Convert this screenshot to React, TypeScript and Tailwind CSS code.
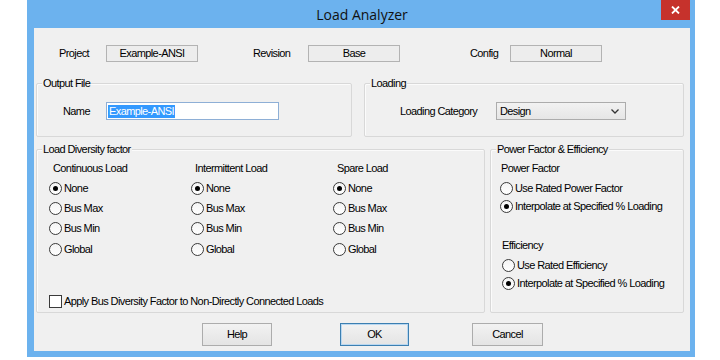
import React from 'react';

const ui = "font-['Liberation_Sans',Arial,sans-serif] text-[11px] leading-[13px] tracking-[-0.6px] text-black";

function Radio({ label, checked }: { label: string; checked?: boolean }) {
  return (
    <div className="flex items-center">
      <span className="flex h-[13px] w-[13px] items-center justify-center rounded-full border border-[#3a3a3a] bg-gradient-to-b from-[#f4f4f4] to-white">
        {checked && <span className="h-[5px] w-[5px] rounded-full bg-black" />}
      </span>
      <span className="ml-[2px] whitespace-nowrap">{label}</span>
    </div>
  );
}

function Group({ title, className, children }: { title: string; className: string; children: React.ReactNode }) {
  return (
    <div className={`relative rounded-[2px] border border-[#d8d8d8] shadow-[inset_1px_1px_0_#fbfbfb] ${className}`}>
      <span className="absolute -top-[7px] left-[5px] bg-[#f0f0f0] px-[1px] whitespace-nowrap">{title}</span>
      {children}
    </div>
  );
}

function Field({ value }: { value: string }) {
  return (
    <div className="flex h-[17px] w-[92px] items-center justify-center border border-[#b3b3b3] bg-[#ededed]">{value}</div>
  );
}

function Button({ label, isDefault, className }: { label: string; isDefault?: boolean; className: string }) {
  return (
    <div
      className={`flex h-[23px] items-center justify-center bg-gradient-to-b from-[#f2f2f2] to-[#e4e4e4] ${
        isDefault ? 'border border-[#3c7fb1] shadow-[inset_0_0_0_1px_#b9d7f0]' : 'border border-[#acacac]'
      } ${className}`}
    >
      {label}
    </div>
  );
}

const columns = ['Continuous Load', 'Intermittent Load', 'Spare Load'];
const options = ['None', 'Bus Max', 'Bus Min', 'Global'];

export default function App() {
  return (
    <div className="h-[360px] w-[720px] overflow-hidden bg-white">
      <div className={`ml-[27px] flex h-[357px] w-[668px] flex-col bg-[#6cb2ee] pl-[7px] pr-[5px] pb-[6px] ${ui}`}>
        {/* title bar */}
        <div className="relative flex h-[28px] items-center justify-center">
          <span className="font-['Segoe_UI','Open_Sans',sans-serif] text-[14px] tracking-normal text-[#111]">Load Analyzer</span>
          <div className="absolute right-0 top-0 flex h-[20px] w-[29px] items-center justify-center bg-[#c6322c]">
            <svg width="9" height="8" viewBox="0 0 9 8">
              <path d="M1 0.5 L8 7.5 M8 0.5 L1 7.5" stroke="white" strokeWidth="1.8" />
            </svg>
          </div>
        </div>

        {/* client area */}
        <div className="flex h-[323px] flex-col bg-[#f0f0f0] pl-[2px] pr-[6px]">
          <div className="mt-[17px] flex h-[17px] items-center pl-[23px]">
            <span className="w-[47px]">Project</span>
            <Field value="Example-ANSI" />
            <span className="ml-[55px] w-[55px]">Revision</span>
            <Field value="Base" />
            <span className="ml-[70px] w-[40px]">Config</span>
            <Field value="Normal" />
          </div>

          <div className="mt-[21px] flex">
            <Group title="Output File" className="h-[54px] w-[316px]">
              <div className="flex items-center pl-[26px] pt-[18px]">
                <span className="w-[43px]">Name</span>
                <div className="flex h-[18px] w-[173px] items-center border border-[#8eafd6] bg-white pl-[1px]">
                  <span className="bg-[#3399ff] px-[1px] text-white">Example-ANSI</span>
                </div>
              </div>
            </Group>
            <Group title="Loading" className="ml-[12px] h-[54px] w-[320px]">
              <div className="flex items-center pl-[35px] pt-[18px]">
                <span className="w-[96px]">Loading Category</span>
                <div className="flex h-[18px] w-[130px] items-center justify-between border border-[#acacac] bg-gradient-to-b from-[#f2f2f2] to-[#e6e6e6] pl-[3px] pr-[6px]">
                  <span>Design</span>
                  <svg width="8" height="5" viewBox="0 0 8 5">
                    <path d="M0.5 0.5 L4 4 L7.5 0.5" stroke="#333" strokeWidth="1.3" fill="none" />
                  </svg>
                </div>
              </div>
            </Group>
          </div>

          <div className="mt-[12px] flex">
            <Group title="Load Diversity factor" className="h-[164px] w-[449px]">
              <div className="grid grid-cols-[142px_142px_142px] pl-[12px] pt-[8px]">
                {columns.map((col) => (
                  <div key={col} className="flex flex-col">
                    <div className="flex h-[20px] items-center pl-[4px]">{col}</div>
                    {options.map((opt, i) => (
                      <div key={opt} className="flex h-[20.4px] items-center">
                        <Radio label={opt} checked={i === 0} />
                      </div>
                    ))}
                  </div>
                ))}
              </div>
              <div className="mt-[32px] flex h-[20px] items-center pl-[12px]">
                <span className="h-[13px] w-[13px] border border-[#3a3a3a] bg-white" />
                <span className="ml-[2px] whitespace-nowrap">Apply Bus Diversity Factor to Non-Directly Connected Loads</span>
              </div>
            </Group>

            <Group title="Power Factor & Efficiency" className="ml-[5px] h-[164px] w-[194px]">
              <div className="flex flex-col pl-[9px] pt-[8px]">
                <div className="flex h-[20px] items-center pl-[1px]">Power Factor</div>
                <div className="flex h-[20px] items-center">
                  <Radio label="Use Rated Power Factor" />
                </div>
                <div className="flex h-[16px] items-center">
                  <Radio label="Interpolate at Specified % Loading" checked />
                </div>
                <div className="mt-[21px] flex h-[20px] items-center pl-[2px]">Efficiency</div>
                <div className="flex h-[20px] items-center pl-[2px]">
                  <Radio label="Use Rated Efficiency" />
                </div>
                <div className="flex h-[16px] items-center pl-[2px]">
                  <Radio label="Interpolate at Specified % Loading" checked />
                </div>
              </div>
            </Group>
          </div>

          <div className="mt-[10px] flex">
            <Button label="Help" className="ml-[166px] w-[70px]" />
            <Button label="OK" isDefault className="ml-[68px] w-[69px]" />
            <Button label="Cancel" className="ml-[63px] w-[71px]" />
          </div>
        </div>
      </div>
    </div>
  );
}
